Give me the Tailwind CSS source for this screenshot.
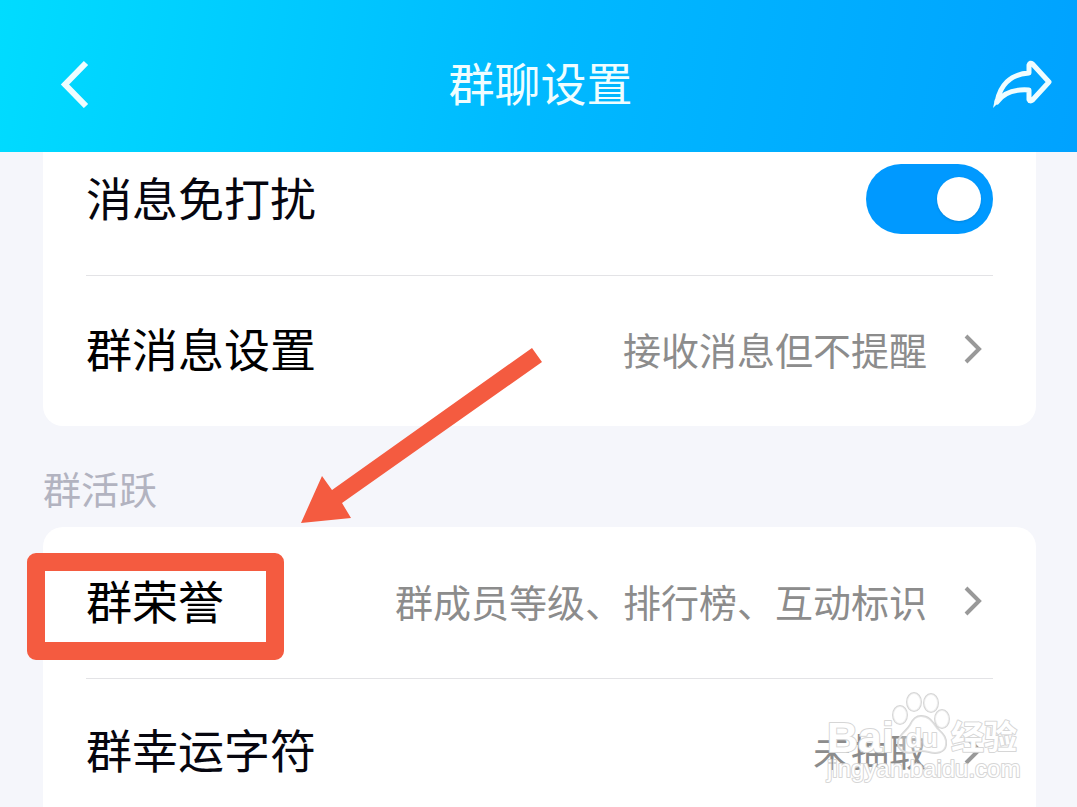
<!DOCTYPE html>
<html lang="zh-CN">

<head>
  <meta charset="UTF-8" />
  <meta name="viewport" content="width=device-width, initial-scale=1" />
  <title>群聊设置</title>
  <script src="https://cdn.jsdelivr.net/npm/@tailwindcss/browser@4"></script>
</head>

<body class="relative h-screen overflow-hidden flex flex-col bg-[#f5f6fb] text-[#06060f] font-['Noto_Sans_CJK_SC',sans-serif]">

  <!-- Header -->
  <header class="h-[152px] shrink-0 pt-4 pl-15 pr-6 flex items-center justify-between bg-linear-100 from-[#00dcff] via-[#00b9ff] to-[#00a2ff] text-[#effdff]">
    <button type="button" aria-label="返回" class="w-15">
      <svg class="w-8 h-12" viewBox="0 0 32 48" fill="none" stroke="currentColor" stroke-width="6">
        <path d="M26 3 L5 24.500 L26 46" />
      </svg>
    </button>
    <h1 class="flex-1 pb-1.5 pr-8 text-center text-[46px] leading-[68px]">群聊设置</h1>
    <button type="button" aria-label="分享" class="w-15">
      <svg class="w-15 h-12" viewBox="0 0 60 48" fill="none" stroke="currentColor" stroke-width="5" stroke-linejoin="round">
        <path d="M4 42 C7 26 17 14 36 13 V5 Q37 2 39.500 4 L56 22 L39.500 40 Q37 42 36 39.500 V30 C22 29 11 32 4 42 Z" />
        <path d="M0 48 L2 39 L9 39 Z" fill="currentColor" stroke="none" />
      </svg>
    </button>
  </header>

  <main class="flex-1 pl-[43px] pr-[41px]">

    <!-- 消息设置 -->
    <section class="bg-white rounded-b-[20px] px-[43px]">
      <div class="h-[124px] pb-[30px] flex items-center justify-between border-b border-[#e3e3e6]">
        <label for="mute" class="pb-1.5 text-[46px] leading-[68px]">消息免打扰</label>
        <input id="mute" type="checkbox" role="switch" checked
          class="appearance-none w-[127px] h-[70px] rounded-full bg-[#ccc] checked:bg-[#0099ff] flex items-center checked:justify-end px-3 before:block before:size-11 before:rounded-full before:bg-white before:shadow" />
      </div>
      <a href="#" class="h-[150px] pb-1 flex items-center">
        <span class="flex-1 pb-1 text-[46px] leading-[68px] text-black">群消息设置</span>
        <span class="text-[38px] leading-[56px] text-[#8c8c8c]">接收消息但不提醒</span>
        <svg class="w-5 h-8 ml-9 mr-2.5 text-[#999]" viewBox="0 0 20 32" fill="none" stroke="currentColor" stroke-width="4">
          <path d="M3 3 L16 16 L3 29" />
        </svg>
      </a>
    </section>

    <h2 class="pt-[34px] pb-[11px] text-[38px] leading-[56px] text-[#b2b3c0]">群活跃</h2>

    <!-- 群活跃 -->
    <section class="relative bg-white rounded-t-[20px] px-[43px]">
      <a href="#" class="h-[152px] pb-1 flex items-center border-b border-[#e3e3e6]">
        <span class="flex-1 pb-1 text-[46px] leading-[68px] text-black">群荣誉</span>
        <span class="text-[38px] leading-[56px] text-[#8c8c8c]">群成员等级、排行榜、互动标识</span>
        <svg class="w-5 h-8 ml-9 mr-2.5 text-[#999]" viewBox="0 0 20 32" fill="none" stroke="currentColor" stroke-width="4">
          <path d="M3 3 L16 16 L3 29" />
        </svg>
      </a>
      <a href="#" class="h-[146px] pb-1 flex items-center">
        <span class="flex-1 pb-1 text-[46px] leading-[68px]">群幸运字符</span>
        <span class="text-[38px] leading-[56px] text-[#8c8c8c]">未抽取</span>
        <svg class="w-5 h-8 ml-9 mr-2.5 text-[#999]" viewBox="0 0 20 32" fill="none" stroke="currentColor" stroke-width="4">
          <path d="M3 3 L16 16 L3 29" />
        </svg>
      </a>

      <!-- Marker box and arrow -->
      <div class="absolute -left-4 top-[26px] w-[257px] h-[107px] border-[18px] border-[#f45b40] rounded-[9px] pointer-events-none"></div>
      <svg class="absolute left-[258px] -top-[180px] w-[242px] h-[177px] pointer-events-none" viewBox="0 0 242 177" fill="#f45b40">
        <path d="M0 176 L21 129 L31 143 L231 1 L241 15 L41 156 L50 171 Z" />
      </svg>
    </section>
  </main>

  <!-- Watermark -->
  <svg class="absolute right-14 bottom-5 w-[197px] h-[100px] pointer-events-none" viewBox="0 0 197 100" fill="#fff" fill-opacity="0.6" stroke="#d6d6d6" stroke-width="1" font-family="Liberation Sans, Noto Sans CJK SC, sans-serif" font-weight="bold">
    <g stroke-width="2" stroke-linejoin="round" paint-order="stroke">
      <ellipse cx="76" cy="28" rx="7" ry="9" />
      <ellipse cx="90" cy="15" rx="7" ry="9" />
      <ellipse cx="107" cy="16" rx="7" ry="9" />
      <ellipse cx="118" cy="32" rx="7" ry="9" />
      <path fill-opacity="0.3" d="M97 29 C105 29 108 34 113 41 C119 47 123 50 122 58 C121 66 112 67 105 65 Q97 63 90 65 C82 67 74 64 74 56 C74 48 82 45 86 38 Q90 29 97 29 Z" />
      <text x="3" y="65" font-size="43" fill-opacity="1">Bai</text>
      <text x="82" y="60" font-size="26" fill-opacity="1">du</text>
      <text x="127" y="62" font-size="33" fill-opacity="1" font-family="Noto Sans CJK SC, sans-serif">经验</text>
      <text x="3" y="90" font-size="24" fill-opacity="1" font-weight="normal">jingyan.baidu.com</text>
    </g>
  </svg>

</body>

</html>
